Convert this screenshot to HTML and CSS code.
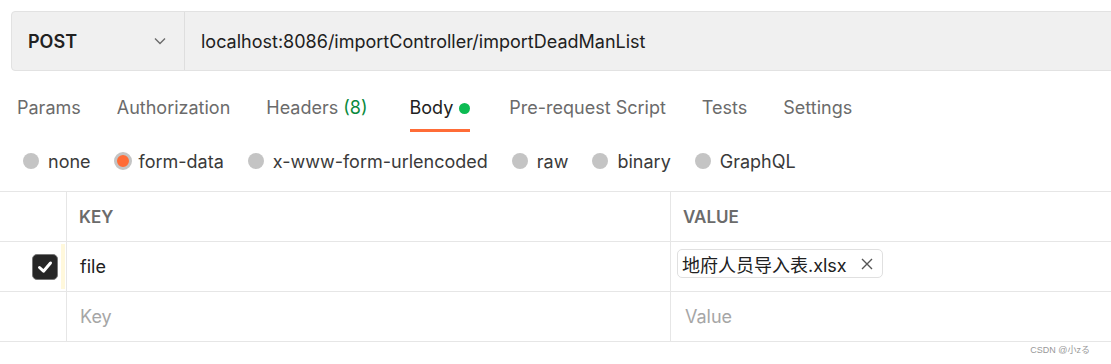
FILE: index.html
```html
<!DOCTYPE html>
<html lang="en">
<head>
    <meta charset="UTF-8">
    <meta name="viewport" content="width=device-width, initial-scale=1.0">
    <title>Request</title>
    <link rel="stylesheet" href="styles.css">
</head>
<body>
    <div class="urlBar">
        <div class="method">
            <span>POST</span>
            <svg class="chevron" width="14" height="14" viewBox="0 0 14 14"><path d="M2 4.5 L7 9.5 L12 4.5" fill="none" stroke="#6b6b6b" stroke-width="1.4"/></svg>
        </div>
        <div class="url">localhost:8086/importController/importDeadManList</div>
    </div>

    <div class="tabs">
        <div class="tab">Params</div>
        <div class="tab">Authorization</div>
        <div class="tab">Headers <span class="count">(8)</span></div>
        <div class="tab active">Body <span class="dot"></span></div>
        <div class="tab">Pre-request Script</div>
        <div class="tab">Tests</div>
        <div class="tab">Settings</div>
    </div>

    <div class="bodyTypes">
        <label class="radio"><span class="circle"></span>none</label>
        <label class="radio"><span class="circle checked"></span>form-data</label>
        <label class="radio"><span class="circle"></span>x-www-form-urlencoded</label>
        <label class="radio"><span class="circle"></span>raw</label>
        <label class="radio"><span class="circle"></span>binary</label>
        <label class="radio"><span class="circle"></span>GraphQL</label>
    </div>

    <div class="table">
        <div class="row head">
            <div class="cell check"></div>
            <div class="cell key">KEY</div>
            <div class="cell value">VALUE</div>
        </div>
        <div class="row">
            <div class="cell check">
                <span class="box">
                    <svg width="18" height="18" viewBox="0 0 18 18"><path d="M3.5 9.5 L7.5 13.2 L14.5 5" fill="none" stroke="white" stroke-width="3" stroke-linecap="round" stroke-linejoin="round"/></svg>
                </span>
                <span class="strip"></span>
            </div>
            <div class="cell key">file</div>
            <div class="cell value">
                <span class="chip">地府人员导入表.xlsx
                    <svg width="12" height="12" viewBox="0 0 12 12"><path d="M1 1 L11 11 M11 1 L1 11" stroke="#555" stroke-width="1.4"/></svg>
                </span>
            </div>
        </div>
        <div class="row">
            <div class="cell check"></div>
            <div class="cell key placeholder">Key</div>
            <div class="cell value placeholder">Value</div>
        </div>
    </div>

    <div class="watermark">CSDN @小zる</div>
</body>
</html>
```

FILE: styles.css
```css
body {
    margin: 0;
    font-family: Inter, "Noto Sans CJK SC", sans-serif;
    color: #212121;
    background-color: white;
    width: 1111px;
    height: 364px;
    overflow: hidden;
    position: relative;
}
.urlBar {
    display: flex;
    margin: 11px 0 0 11px;
    width: 1120px;
    height: 58px;
    background-color: #f0f0f0;
    border: 1px solid #e2e2e2;
    border-radius: 4px;
    font-size: 18px;
}
.method {
    width: 140px;
    padding-left: 16px;
    padding-right: 16px;
    display: flex;
    align-items: center;
    justify-content: space-between;
    border-right: 1px solid #dedede;
    font-weight: 600;
}
.chevron {
    margin-right: 1px;
}
.url {
    display: flex;
    align-items: center;
    padding-left: 16px;
    color: #212121;
}
.tabs {
    display: flex;
    margin-top: 14px;
    padding-left: 17px;
    height: 47px;
}
.tab {
    font-size: 18px;
    color: #6b6b6b;
    margin-right: 36px;
    padding-top: 12px;
    box-sizing: border-box;
    height: 47px;
    display: flex;
    align-items: flex-start;
    gap: 6px;
}
.tab .count {
    color: #0b8a3d;
    margin-left: -1px;
}
.tab.active {
    color: #212121;
    margin-left: 6px;
    margin-right: 39px;
    border-bottom: 3px solid #ff6c37;
}
.dot {
    width: 11px;
    height: 11px;
    border-radius: 50%;
    background-color: #0cbb52;
    margin-top: 6px;
}
.bodyTypes {
    display: flex;
    align-items: center;
    padding-left: 23px;
    height: 38px;
    margin-top: 10px;
    font-size: 18px;
    color: #3a3a3a;
}
.radio {
    display: flex;
    align-items: center;
    gap: 9px;
    margin-right: 24px;
}
.circle {
    width: 16px;
    height: 16px;
    border-radius: 50%;
    background-color: #c4c4c4;
    box-sizing: border-box;
}
.circle.checked {
    width: 18px;
    height: 18px;
    margin-left: -1px;
    margin-right: -2px;
    border: 3px solid #c4c4c4;
    background-color: #ff6c37;
}
.table {
    margin-top: 11px;
    border-top: 1px solid #e6e6e6;
}
.row {
    display: flex;
    height: 49px;
    border-bottom: 1px solid #e6e6e6;
}
.cell {
    display: flex;
    align-items: center;
    font-size: 18px;
    box-sizing: border-box;
}
.check {
    width: 67px;
    border-right: 1px solid #e6e6e6;
    justify-content: flex-end;
}
.key {
    width: 604px;
    padding-left: 13px;
    border-right: 1px solid #e6e6e6;
    color: #212121;
}
.value {
    flex: 1;
    padding-left: 6px;
}
.head .cell {
    font-size: 17px;
    font-weight: 600;
    color: #6b6b6b;
    padding-top: 1px;
}
.head .key {
    padding-left: 12px;
}
.head .value {
    padding-left: 12px;
}
.box {
    width: 26px;
    height: 26px;
    border-radius: 5px;
    background-color: #262626;
    border: 1px solid #777;
    box-sizing: border-box;
    display: flex;
    align-items: center;
    justify-content: center;
    margin-right: 3px;
}
.strip {
    width: 4px;
    height: 45px;
    background-color: #fff8dc;
    margin-right: 1px;
}
.chip {
    display: flex;
    align-items: center;
    gap: 14px;
    height: 29px;
    margin-bottom: 6px;
    padding: 0 9px 0 4px;
    border: 1px solid #e0e0e0;
    border-radius: 5px;
    box-sizing: border-box;
    color: #212121;
}
.placeholder {
    color: #a6a6a6;
}
.value.placeholder {
    padding-left: 14px;
}
.watermark {
    position: absolute;
    right: 21px;
    bottom: 8px;
    font-size: 9px;
    color: #999;
    font-family: "Liberation Sans", "Noto Sans CJK SC", sans-serif;
}
```
